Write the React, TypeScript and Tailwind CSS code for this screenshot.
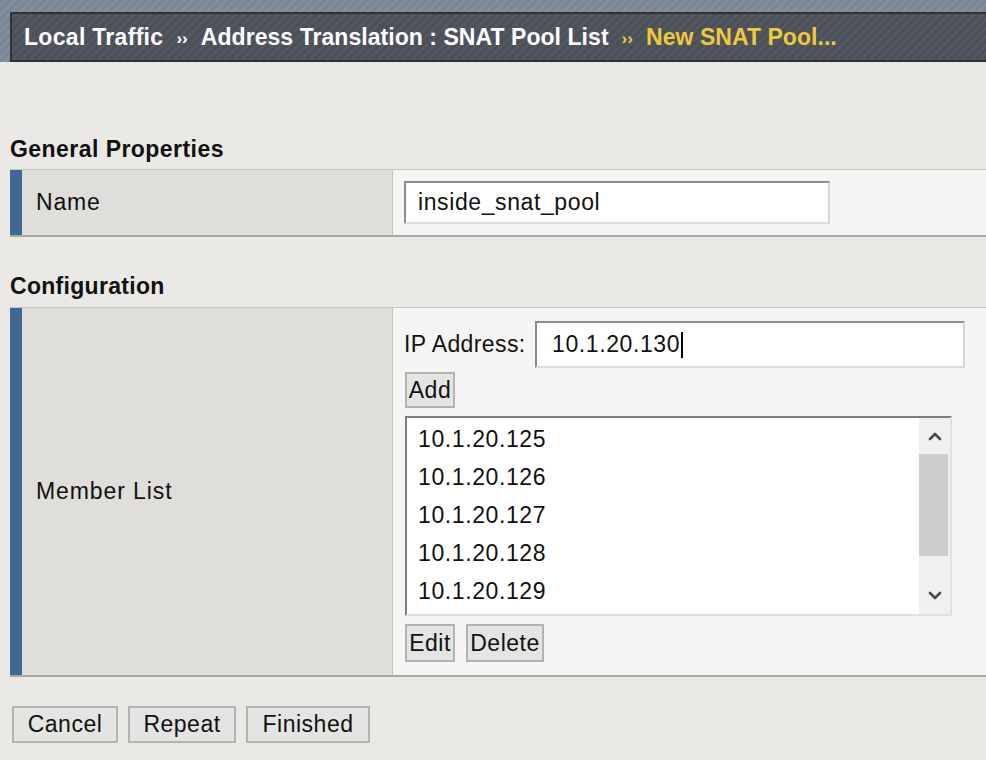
import React from "react";

function Chevron({ up }: { up?: boolean }) {
  return (
    <svg width="14" height="10" viewBox="0 0 14 10" fill="none">
      {up ? (
        <path d="M2 8 L7 3 L12 8" stroke="#4a4a4a" strokeWidth="2.6" strokeLinecap="round" strokeLinejoin="round" />
      ) : (
        <path d="M2 2 L7 7 L12 2" stroke="#4a4a4a" strokeWidth="2.6" strokeLinecap="round" strokeLinejoin="round" />
      )}
    </svg>
  );
}

function Btn({ label, w, h }: { label: string; w: string; h: string }) {
  return (
    <div
      className={`${w} ${h} flex items-center justify-center bg-[#e4e4e3] border-2 border-[#b3b3b3] text-[23px] tracking-[0.5px] leading-none text-[#111]`}
    >
      {label}
    </div>
  );
}

export default function App() {
  const members = ["10.1.20.125", "10.1.20.126", "10.1.20.127", "10.1.20.128", "10.1.20.129"];
  return (
    <div className="w-[986px] h-[760px] overflow-hidden bg-[#eae9e5] font-['Liberation_Sans',Arial,sans-serif] text-[#111]">
      {/* Header */}
      <div className="h-[62px] pt-[12px] pl-[10px] bg-[repeating-linear-gradient(-45deg,#7a8595_0px,#7a8595_3px,#838e9d_3px,#838e9d_6px)]">
        <div className="h-[50px] flex items-center gap-[13px] pl-[12px] border-t-2 border-b-2 border-l-2 border-[#2e3136] bg-[repeating-linear-gradient(-45deg,#4a4f58_0px,#4a4f58_3px,#51565f_3px,#51565f_6px)] text-[23px] font-bold tracking-[0.05px] text-white whitespace-nowrap">
          <span className="tracking-[0.3px]">Local Traffic</span>
          <span className="text-[17px] mt-[4px]">››</span>
          <span>Address Translation : SNAT Pool List</span>
          <span className="text-[17px] mt-[4px] text-[#f0c93a]">››</span>
          <span className="text-[#f0c93a]">New SNAT Pool...</span>
        </div>
      </div>

      <div className="pl-[10px]">
        {/* General Properties */}
        <div className="mt-[70px] h-[34px] leading-[34px] text-[23px] font-bold tracking-[0.45px]">General Properties</div>
        <div className="mt-[3px] h-[68px] flex border-t border-[#c6c6c4] border-b-2 border-b-[#a9a9a8]">
          <div className="w-[12px] bg-[#3f6895]" />
          <div className="w-[371px] bg-[#dfdeda] border-r border-[#c4c4c2] flex items-center pl-[14px] text-[23px] tracking-[0.8px]">
            Name
          </div>
          <div className="flex-1 bg-[#f6f5f3] flex items-center pl-[11px]">
            <div className="w-[426px] h-[43px] bg-white border-2 border-t-[#8c8c8c] border-l-[#8c8c8c] border-r-[#d6d6d6] border-b-[#dedede] flex items-center pl-[12px] text-[23px] tracking-[0.6px]">
              inside_snat_pool
            </div>
          </div>
        </div>

        {/* Configuration */}
        <div className="mt-[32px] h-[34px] leading-[34px] text-[23px] font-bold tracking-[0.3px]">Configuration</div>
        <div className="mt-[4px] h-[370px] flex border-t border-[#c6c6c4] border-b-2 border-b-[#a9a9a8]">
          <div className="w-[12px] bg-[#3f6895]" />
          <div className="w-[371px] bg-[#dfdeda] border-r border-[#c4c4c2] flex items-center pl-[14px] text-[23px] tracking-[0.9px]">
            Member List
          </div>
          <div className="flex-1 bg-[#f6f5f3] pl-[11px] pt-[13px] flex flex-col items-start">
            <div className="flex items-center">
              <div className="w-[131px] text-[23px] tracking-[0.4px]">IP Address:</div>
              <div className="w-[430px] h-[47px] bg-white border-2 border-t-[#8c8c8c] border-l-[#8c8c8c] border-r-[#d6d6d6] border-b-[#dedede] flex items-center pl-[15px] text-[23px] tracking-[0.6px]">
                10.1.20.130
                <span className="inline-block w-[2px] h-[26px] bg-black ml-[1px]" />
              </div>
            </div>
            <div className="mt-[4px] ml-[1px]">
              <Btn label="Add" w="w-[50px]" h="h-[36px]" />
            </div>
            <div className="mt-[8px] ml-[1px] w-[547px] h-[200px] bg-white border-2 border-t-[#7d7d7d] border-l-[#7d7d7d] border-r-[#e0e0e0] border-b-[#e0e0e0] flex">
              <div className="flex-1 pt-[2px] pl-[11px]">
                {members.map((m) => (
                  <div key={m} className="h-[38px] leading-[38px] text-[23px] tracking-[0.6px]">
                    {m}
                  </div>
                ))}
              </div>
              <div className="w-[31px] bg-[#f0f0f0] flex flex-col">
                <div className="h-[36px] flex items-center justify-center">
                  <Chevron up />
                </div>
                <div className="h-[102px] mr-[2px] bg-[#cdcdcd]" />
                <div className="flex-1" />
                <div className="h-[36px] flex items-center justify-center">
                  <Chevron />
                </div>
              </div>
            </div>
            <div className="mt-[8px] ml-[1px] flex gap-[11px]">
              <Btn label="Edit" w="w-[50px]" h="h-[38px]" />
              <Btn label="Delete" w="w-[78px]" h="h-[38px]" />
            </div>
          </div>
        </div>

        {/* Bottom buttons */}
        <div className="mt-[29px] pl-[2px] flex gap-[10px]">
          <Btn label="Cancel" w="w-[106px]" h="h-[37px]" />
          <Btn label="Repeat" w="w-[108px]" h="h-[37px]" />
          <Btn label="Finished" w="w-[124px]" h="h-[37px]" />
        </div>
      </div>
    </div>
  );
}
